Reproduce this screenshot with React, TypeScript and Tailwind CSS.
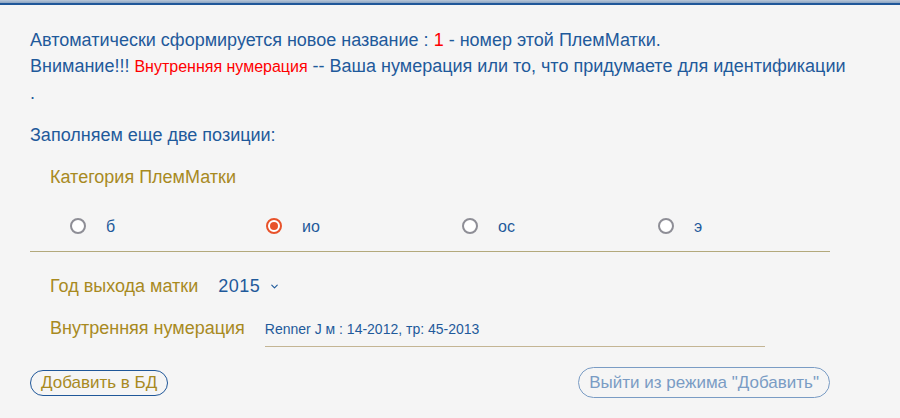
import { ChevronDown } from "lucide-react"

const CATEGORIES = ["б", "ио", "ос", "э"]

function Radio({ label, checked }: { label: string; checked?: boolean }) {
  return (
    <div className="flex items-center w-[196px]">
      {checked ? (
        <span className="w-[16px] h-[16px] rounded-full border-[2px] border-[#e8522a] flex items-center justify-center bg-white">
          <span className="w-[8px] h-[8px] rounded-full bg-[#e8522a]" />
        </span>
      ) : (
        <span className="w-[16px] h-[16px] rounded-full border-[2px] border-[#8e8e96] bg-white" />
      )}
      <span className="ml-[20px] pt-[2px] text-[16px] text-[#1f5a9b] leading-none">{label}</span>
    </div>
  )
}

export default function App() {
  return (
    <div className="w-[900px] h-[418px] bg-[#f5f5f5] overflow-hidden font-['Liberation_Sans',Arial,sans-serif]">
      {/* top edge */}
      <div className="h-[3px] bg-gradient-to-b from-[#b9c7d8] to-[#8aa3c2]" />
      <div className="h-[2px] bg-[#1f5799]" />

      <div className="pl-[30px] pt-[22px]">
        <div className="text-[18px] leading-[26px] text-[#1f5a9b]">
          <div>
            Автоматически сформируется новое название : <span className="text-[#ff0000]">1</span> - номер этой ПлемМатки.
          </div>
          <div>
            Внимание!!! <span className="text-[16px] text-[#ff0000]">Внутренняя нумерация</span> -- Ваша нумерация или то, что придумаете для идентификации
          </div>
          <div>.</div>
        </div>

        <div className="mt-[16px] text-[18px] leading-[26px] text-[#1f5a9b]">Заполняем еще две позиции:</div>

        <div className="mt-[16px] ml-[20px] text-[18px] leading-[26px] text-[#a88a1f]">Категория ПлемМатки</div>

        <div className="mt-[25px] ml-[40px] flex h-[22px] items-center">
          {CATEGORIES.map((c) => (
            <Radio key={c} label={c} checked={c === "ио"} />
          ))}
        </div>
        <div className="mt-[14px] w-[800px] h-px bg-[#b3a97c]" />

        <div className="mt-[21px] ml-[20px] flex items-center h-[26px]">
          <span className="text-[18px] text-[#a88a1f]">Год выхода матки</span>
          <span className="ml-[20px] text-[18px] text-[#1f5a9b] tracking-[0.5px]">2015</span>
          <ChevronDown size={11} strokeWidth={2.5} className="ml-[9px] text-[#1f5a9b]" />
        </div>

        <div className="mt-[16px] ml-[20px] flex items-end">
          <span className="text-[18px] leading-[26px] text-[#a88a1f] pb-[6px]">Внутренняя нумерация</span>
          <div className="ml-[20px] w-[500px] border-b border-[#c4b594] h-[32px] pb-[2px] flex items-center">
            <span className="text-[14px] text-[#1f5a9b]">Renner J м : 14-2012, тр: 45-2013</span>
          </div>
        </div>

        <div className="mt-[20px] w-[800px] flex items-center justify-between">
          <button className="h-[26px] px-[10px] rounded-full border border-[#1f5799] text-[17px] text-[#a88a1f] leading-none">
            Добавить в БД
          </button>
          <button className="h-[31px] px-[10px] rounded-full border border-[#7a9cc4] text-[17px] text-[#7a9cc4] leading-none">
            Выйти из режима "Добавить"
          </button>
        </div>
      </div>
    </div>
  )
}
